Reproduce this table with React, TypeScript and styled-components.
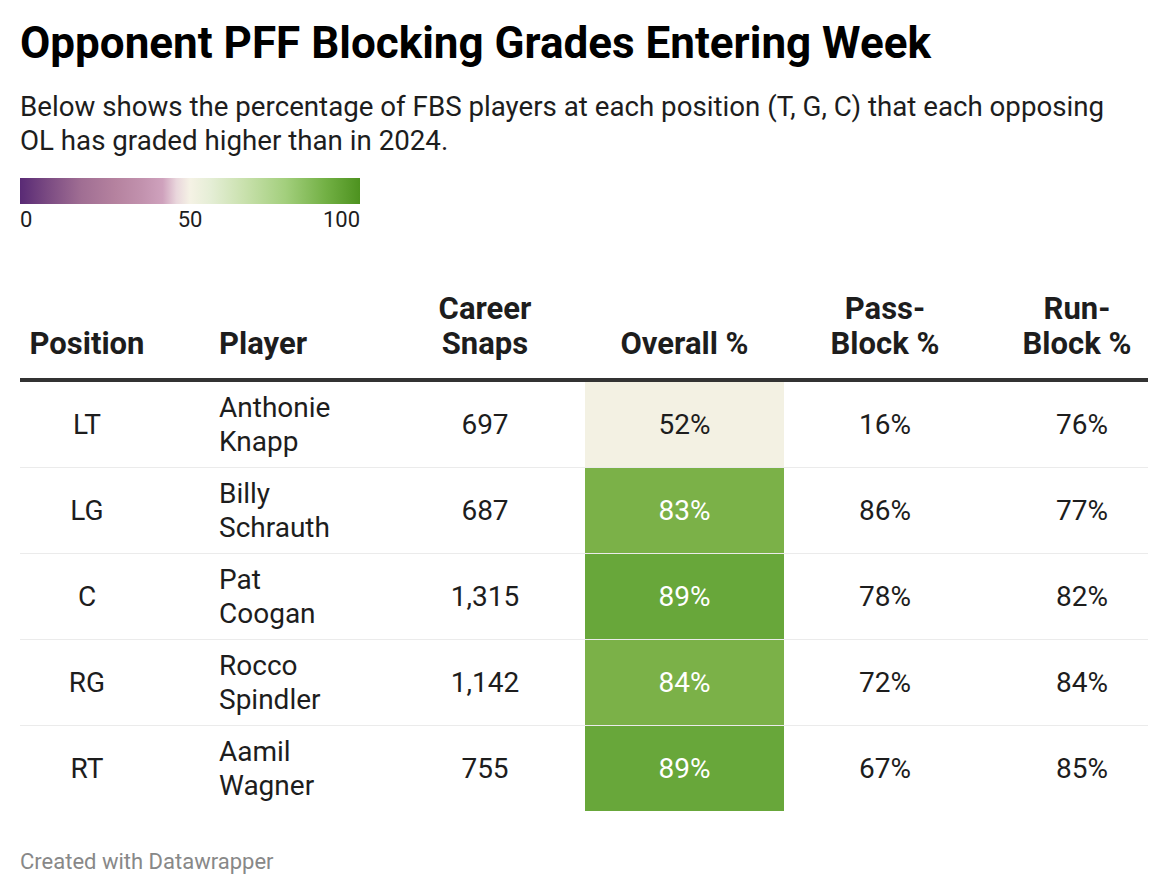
import React from 'react'
import styled, { createGlobalStyle } from 'styled-components'

const GlobalStyle = createGlobalStyle`
  html, body {
    margin: 0;
    background: #fff;
  }
  body {
    font-family: Roboto, 'Liberation Sans', sans-serif;
    color: #1d1d1d;
  }
`

const Page = styled.div`
  padding: 17px 20px 0 20px;
  width: 1128px;
`

const Title = styled.h1`
  margin: 0;
  font: 700 44px/52px Roboto, sans-serif;
  color: #000;
`

const Subtitle = styled.p`
  margin: 21px 0 0;
  max-width: 1110px;
  font: 400 27.7px/34px Roboto, sans-serif;
  color: #1d1d1d;
`

const Legend = styled.div`
  margin-top: 20px;
  width: 340px;
`

const LegendBar = styled.div`
  height: 26px;
  background: linear-gradient(
    to right,
    #592a75 0%,
    #7a4a82 8%,
    #a06e93 18%,
    #b5829f 28%,
    #c292ae 36%,
    #cfa2bd 42%,
    #e9d6dc 46%,
    #f5f2e5 50%,
    #e5eed6 56%,
    #c9e1ad 66%,
    #a3cf7d 78%,
    #72b044 90%,
    #4d921f 100%
  );
`

const LegendLabels = styled.div`
  position: relative;
  margin-top: 3px;
  height: 26px;
  font: 400 22px/26px Roboto, sans-serif;
  color: #1d1d1d;
`

const LegendTick = styled.span<{ $at: 'start' | 'middle' | 'end' }>`
  position: absolute;
  top: 0;
  ${(p) =>
    p.$at === 'start'
      ? 'left: 0;'
      : p.$at === 'end'
      ? 'right: 0;'
      : 'left: 50%; transform: translateX(-50%);'}
`

const Table = styled.table`
  margin-top: 58px;
  width: 1128px;
  border-collapse: collapse;
  table-layout: fixed;
`

const HeadCell = styled.th<{ $align?: string; $pad?: string }>`
  font: 700 31px/35px Roboto, sans-serif;
  color: #1d1d1d;
  text-align: ${(p) => p.$align || 'center'};
  vertical-align: bottom;
  padding: 0 0 17px;
  padding-left: ${(p) => p.$pad || '0'};
  border-bottom: 4px solid #333;
`

const Row = styled.tr`
  border-bottom: 1px solid #ebebeb;
  &:last-child {
    border-bottom: none;
  }
`

const Cell = styled.td<{ $align?: string; $pad?: string }>`
  height: 85px;
  font: 400 28px/34px Roboto, sans-serif;
  color: #1d1d1d;
  text-align: ${(p) => p.$align || 'center'};
  padding: 0;
  padding-left: ${(p) => p.$pad || '0'};
  vertical-align: middle;
`

const ScoreCell = styled(Cell)<{ $bg: string; $light: boolean }>`
  background: ${(p) => p.$bg};
  color: ${(p) => (p.$light ? '#fff' : '#1d1d1d')};
`

const Footer = styled.div`
  margin-top: 38px;
  font: 400 22px/26px Roboto, sans-serif;
  color: #888;
`

const rows = [
  { pos: 'LT', first: 'Anthonie', last: 'Knapp', snaps: '697', overall: 52, pass: '16%', run: '76%' },
  { pos: 'LG', first: 'Billy', last: 'Schrauth', snaps: '687', overall: 83, pass: '86%', run: '77%' },
  { pos: 'C', first: 'Pat', last: 'Coogan', snaps: '1,315', overall: 89, pass: '78%', run: '82%' },
  { pos: 'RG', first: 'Rocco', last: 'Spindler', snaps: '1,142', overall: 84, pass: '72%', run: '84%' },
  { pos: 'RT', first: 'Aamil', last: 'Wagner', snaps: '755', overall: 89, pass: '67%', run: '85%' },
]

function scoreColor(v: number) {
  if (v >= 88) return '#68a73a'
  if (v >= 80) return '#7bb148'
  return '#f3f1e3'
}

export default function App() {
  return (
    <Page>
      <GlobalStyle />
      <Title>Opponent PFF Blocking Grades Entering Week</Title>
      <Subtitle>
        Below shows the percentage of FBS players at each position (T, G, C) that each opposing OL
        has graded higher than in 2024.
      </Subtitle>
      <Legend>
        <LegendBar />
        <LegendLabels>
          <LegendTick $at="start">0</LegendTick>
          <LegendTick $at="middle">50</LegendTick>
          <LegendTick $at="end">100</LegendTick>
        </LegendLabels>
      </Legend>
      <Table>
        <colgroup>
          <col style={{ width: 134 }} />
          <col style={{ width: 231 }} />
          <col style={{ width: 200 }} />
          <col style={{ width: 199 }} />
          <col style={{ width: 202 }} />
          <col style={{ width: 162 }} />
        </colgroup>
        <thead>
          <tr>
            <HeadCell>Position</HeadCell>
            <HeadCell $align="left" $pad="65px">Player</HeadCell>
            <HeadCell>
              Career
              <br />
              Snaps
            </HeadCell>
            <HeadCell>Overall %</HeadCell>
            <HeadCell>
              Pass-
              <br />
              Block %
            </HeadCell>
            <HeadCell $pad="20px">
              Run-
              <br />
              Block %
            </HeadCell>
          </tr>
        </thead>
        <tbody>
          {rows.map((r) => (
            <Row key={r.pos}>
              <Cell>{r.pos}</Cell>
              <Cell $align="left" $pad="65px">
                {r.first}
                <br />
                {r.last}
              </Cell>
              <Cell>{r.snaps}</Cell>
              <ScoreCell $bg={scoreColor(r.overall)} $light={r.overall > 70}>
                {r.overall}%
              </ScoreCell>
              <Cell>{r.pass}</Cell>
              <Cell $pad="30px">{r.run}</Cell>
            </Row>
          ))}
        </tbody>
      </Table>
      <Footer>Created with Datawrapper</Footer>
    </Page>
  )
}
